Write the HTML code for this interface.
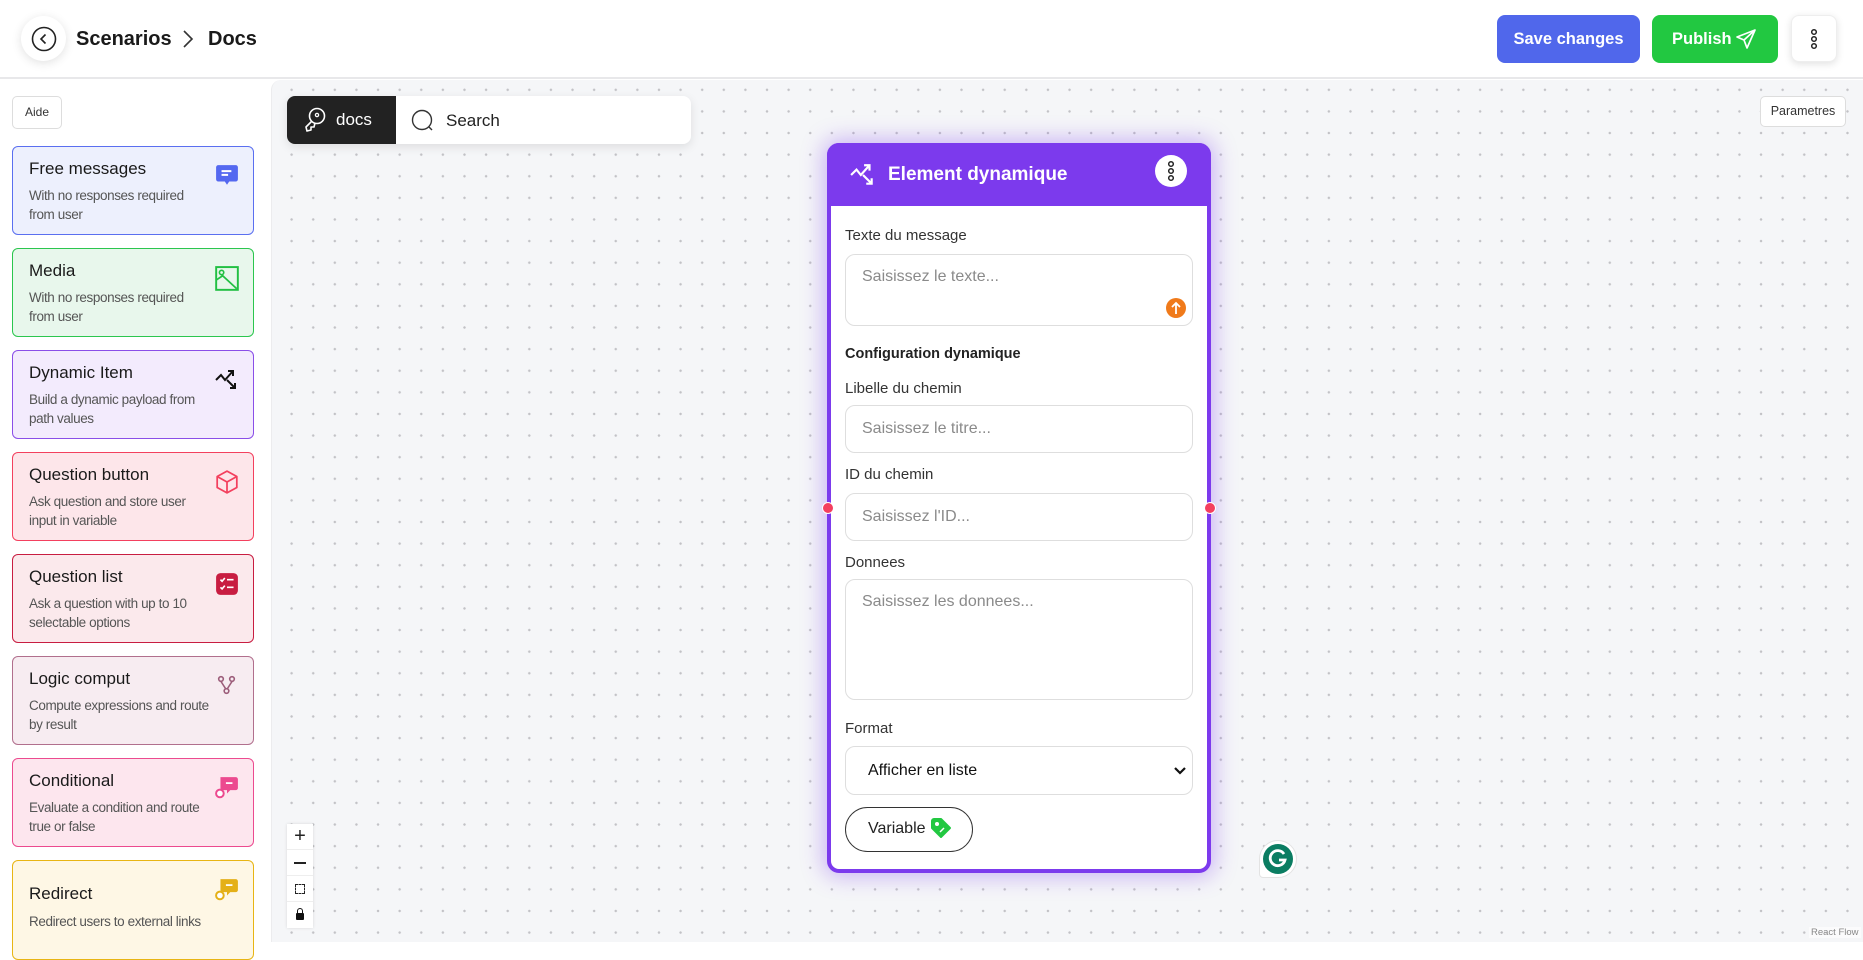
<!DOCTYPE html>
<html><head><meta charset="utf-8">
<style>
*{box-sizing:border-box;margin:0;padding:0}
body{width:1863px;height:942px;overflow:hidden;background:#fff;font-family:"Liberation Sans",sans-serif;color:#1f1f1f;position:relative}
.abs{position:absolute}
.header{left:0;top:0;width:1863px;height:79px;background:#fff;border-bottom:2px solid #e8e8ea}
.canvas{left:271px;top:80px;width:1592px;height:862px;background-color:#f5f6f8;
 background-image:radial-gradient(circle,#c2c2c6 1.1px,transparent 1.4px);
 background-size:21.62px 21.62px;background-position:8.8px -1px;border-top-left-radius:10px;border-left:1px solid #ececee}
.card{position:absolute;left:12px;width:242px;height:89px;border:1.5px solid;border-radius:6px}
.card .t{position:absolute;left:16px;top:12px;font-size:17px;color:#1a1a1a}
.card .d{position:absolute;left:16px;top:39px;font-size:13.5px;line-height:19px;color:#555;white-space:nowrap;letter-spacing:-0.4px}
.card svg{position:absolute;left:202px;top:17px}
.lbl{position:absolute;left:845px;font-size:15px;color:#333}
.inp{position:absolute;left:845px;width:348px;border:1.5px solid #dedede;border-radius:10px;background:#fff}
.ph{position:absolute;left:16px;font-size:16px;color:#8a8a8a}
</style></head><body>
<div class="abs header"></div>
<div class="abs" style="left:21px;top:16px;width:45px;height:45px;border-radius:50%;background:#fff;box-shadow:0 2px 10px rgba(0,0,0,.12)"></div>
<svg class="abs" style="left:31px;top:26px" width="26" height="26" viewBox="0 0 26 26"><circle cx="13" cy="13" r="11.5" fill="none" stroke="#222" stroke-width="1.6"/><path d="M14.5 8.5 L10 13 L14.5 17.5" fill="none" stroke="#222" stroke-width="1.6"/></svg>
<div class="abs" style="left:76px;top:28px;font-size:20px;font-weight:bold;color:#1a1a1a">Scenarios</div>
<svg class="abs" style="left:182px;top:29px" width="12" height="20" viewBox="0 0 12 20"><path d="M2 2 L10 10 L2 18" fill="none" stroke="#333" stroke-width="1.6"/></svg>
<div class="abs" style="left:208px;top:28px;font-size:20px;font-weight:bold;color:#1a1a1a">Docs</div>

<div class="abs" style="left:1497px;top:15px;width:143px;height:48px;background:#5067eb;border-radius:8px;color:#fff;font-weight:bold;font-size:16.5px;text-align:center;line-height:48px">Save changes</div>
<div class="abs" style="left:1652px;top:15px;width:126px;height:48px;background:#22c841;border-radius:8px;color:#fff;font-weight:bold;font-size:16.5px;line-height:48px;padding-left:20px">Publish</div>
<svg class="abs" style="left:1735px;top:28px" width="22" height="22" viewBox="0 0 22 22"><path d="M20 2 L2 9 L9 12 L12 20 Z M9 12 L20 2" fill="none" stroke="#fff" stroke-width="1.7" stroke-linejoin="round"/></svg>
<div class="abs" style="left:1791px;top:15px;width:46px;height:47px;background:#fff;border-radius:8px;box-shadow:0 2px 8px rgba(0,0,0,.12);border:1px solid #eee"></div>
<svg class="abs" style="left:1808px;top:28px" width="12" height="22" viewBox="0 0 12 22"><circle cx="6" cy="4" r="2.3" fill="none" stroke="#222" stroke-width="1.5"/><circle cx="6" cy="11" r="2.3" fill="none" stroke="#222" stroke-width="1.5"/><circle cx="6" cy="18" r="2.3" fill="none" stroke="#222" stroke-width="1.5"/></svg>

<div class="abs" style="left:12px;top:96px;width:50px;height:33px;border:1px solid #ddd;border-radius:5px;font-size:12px;text-align:center;line-height:31px;color:#333">Aide</div>

<div class="card" style="top:146px;background:#edf0fd;border-color:#5a6ff0"><div class="t">Free messages</div><div class="d">With no responses required<br>from user</div>
<svg width="24" height="24" viewBox="0 0 22 22"><path d="M3 1 H19 A2 2 0 0 1 21 3 V14 A2 2 0 0 1 19 16 H13 L11 19 L9 16 H3 A2 2 0 0 1 1 14 V3 A2 2 0 0 1 3 1Z" fill="#5468f0"/><path d="M6 6.5 H15 M6 10 H12" stroke="#fff" stroke-width="1.8"/></svg></div>
<div class="card" style="top:248px;background:#e8f7ec;border-color:#2bc64e"><div class="t">Media</div><div class="d">With no responses required<br>from user</div>
<svg width="24" height="26" viewBox="0 0 22 24"><rect x="1" y="1" width="20" height="21" fill="none" stroke="#22c043" stroke-width="1.8"/><circle cx="6" cy="6" r="2" fill="none" stroke="#22c043" stroke-width="1.5"/><path d="M1 13 L7 9 L20 21" fill="none" stroke="#22c043" stroke-width="1.6"/></svg></div>
<div class="card" style="top:350px;background:#f3ebfd;border-color:#8a4ee8"><div class="t">Dynamic Item</div><div class="d">Build a dynamic payload from<br>path values</div>
<svg width="24" height="24" viewBox="0 0 24 24"><path d="M1 12 L6 7 L10 12 L18 3 M13 3 H18 V8 M12 12 L20 20 M15 20 H20 V15" fill="none" stroke="#111" stroke-width="2"/></svg></div>
<div class="card" style="top:452px;background:#fde6ea;border-color:#f3405e"><div class="t">Question button</div><div class="d">Ask question and store user<br>input in variable</div>
<svg width="24" height="24" viewBox="0 0 22 22"><path d="M11 1 L20 6 V16 L11 21 L2 16 V6 Z M2 6 L11 11 L20 6 M11 11 V21" fill="none" stroke="#f3405e" stroke-width="1.6" stroke-linejoin="round"/></svg></div>
<div class="card" style="top:554px;background:#fbe9ec;border-color:#c81d41"><div class="t">Question list</div><div class="d">Ask a question with up to 10<br>selectable options</div>
<svg width="24" height="24" viewBox="0 0 22 22"><rect x="1" y="1" width="20" height="20" rx="4" fill="#c81d41"/><path d="M5 7 L6.5 8.5 L9 5.5 M11 7 H17 M5 14 L6.5 15.5 L9 12.5 M11 14 H17" fill="none" stroke="#fff" stroke-width="1.5"/></svg></div>
<div class="card" style="top:656px;background:#f7ecf1;border-color:#b16f8d"><div class="t">Logic comput</div><div class="d">Compute expressions and route<br>by result</div>
<svg width="22" height="22" viewBox="0 0 22 22"><circle cx="6" cy="5" r="2.3" fill="none" stroke="#9c5d7a" stroke-width="1.6"/><circle cx="17" cy="5" r="2.3" fill="none" stroke="#9c5d7a" stroke-width="1.6"/><circle cx="11.5" cy="17" r="2.3" fill="none" stroke="#9c5d7a" stroke-width="1.6"/><path d="M6 7.5 L10.5 14.5 M17 7.5 L12.5 14.5" stroke="#9c5d7a" stroke-width="1.6"/></svg></div>
<div class="card" style="top:758px;background:#fde6ee;border-color:#ec4a8f"><div class="t">Conditional</div><div class="d">Evaluate a condition and route<br>true or false</div>
<svg width="24" height="24" viewBox="0 0 22 22"><path d="M5 1 H19 A2 2 0 0 1 21 3 V11 A2 2 0 0 1 19 13 H14 L11 16 V13 H7 A2 2 0 0 1 5 11 Z" fill="#ec4a8f"/><path d="M10 6.5 H16" stroke="#fff" stroke-width="1.6"/><circle cx="4.5" cy="16" r="3.5" fill="#fff" stroke="#ec4a8f" stroke-width="1.8"/></svg></div>
<div class="card" style="top:860px;height:100px;background:#fef7e5;border-color:#e8b514"><div class="t" style="top:23px">Redirect</div><div class="d" style="top:51px">Redirect users to external links</div>
<svg width="24" height="24" viewBox="0 0 22 22"><path d="M5 1 H19 A2 2 0 0 1 21 3 V11 A2 2 0 0 1 19 13 H14 L11 16 V13 H7 A2 2 0 0 1 5 11 Z" fill="#e4b018"/><path d="M10 6.5 H16" stroke="#fff" stroke-width="1.6"/><circle cx="4.5" cy="16" r="3.5" fill="#fff" stroke="#e4b018" stroke-width="1.8"/></svg></div>

<div class="abs canvas"></div>
<div class="abs" style="left:287px;top:96px;width:404px;height:48px;background:#fff;border-radius:8px;box-shadow:0 3px 10px rgba(0,0,0,.1);overflow:hidden">
 <div class="abs" style="left:0;top:0;width:109px;height:48px;background:#222"></div>
</div>
<svg class="abs" style="left:303px;top:107px" width="24" height="26" viewBox="0 0 24 26"><circle cx="14" cy="9" r="7.5" fill="none" stroke="#fff" stroke-width="1.6"/><circle cx="14" cy="8" r="1.6" fill="none" stroke="#fff" stroke-width="1.3"/><path d="M9 14 L3 20 L4 24 L8 23 L8 20 L11 20 L12 16" fill="none" stroke="#fff" stroke-width="1.6" stroke-linejoin="round"/></svg>
<div class="abs" style="left:336px;top:110px;font-size:17px;color:#fff">docs</div>
<svg class="abs" style="left:411px;top:109px" width="24" height="24" viewBox="0 0 24 24"><circle cx="11" cy="11" r="9.5" fill="none" stroke="#333" stroke-width="1.4"/><path d="M18 18 L21 21" stroke="#333" stroke-width="1.4"/></svg>
<div class="abs" style="left:446px;top:111px;font-size:17px;color:#222">Search</div>

<div class="abs" style="left:1760px;top:96px;width:86px;height:31px;background:#fff;border:1px solid #ddd;border-radius:5px;font-size:12.5px;color:#333;text-align:center;line-height:29px">Parametres</div>

<div class="abs" style="left:827px;top:143px;width:384px;height:730px;background:#fff;border:4px solid #7c3aed;border-radius:12px;box-shadow:0 0 22px 4px rgba(124,58,237,.35)"></div>
<div class="abs" style="left:827px;top:143px;width:384px;height:63px;background:#7c3aed;border-radius:12px 12px 0 0"></div>
<svg class="abs" style="left:850px;top:162px" width="26" height="26" viewBox="0 0 24 24"><path d="M1 12 L6 7 L10 12 L18 3 M13 3 H18 V8 M12 12 L20 20 M15 20 H20 V15" fill="none" stroke="#fff" stroke-width="2"/></svg>
<div class="abs" style="left:888px;top:164px;font-size:19px;font-weight:bold;color:#fff">Element dynamique</div>
<div class="abs" style="left:1155px;top:155px;width:32px;height:32px;border-radius:50%;background:#fff"></div>
<svg class="abs" style="left:1165px;top:160px" width="12" height="22" viewBox="0 0 12 22"><circle cx="6" cy="4" r="2.3" fill="none" stroke="#222" stroke-width="1.5"/><circle cx="6" cy="11" r="2.3" fill="none" stroke="#222" stroke-width="1.5"/><circle cx="6" cy="18" r="2.3" fill="none" stroke="#222" stroke-width="1.5"/></svg>

<div class="lbl" style="top:227px">Texte du message</div>
<div class="inp" style="top:254px;height:72px"><div class="ph" style="top:13px">Saisissez le texte...</div></div>
<div class="abs" style="left:1166px;top:298px;width:20px;height:20px;border-radius:50%;background:#f07a1a"></div>
<svg class="abs" style="left:1170px;top:301px" width="12" height="14" viewBox="0 0 12 14"><path d="M6 13 V2 M2 6 L6 2 L10 6" fill="none" stroke="#fff" stroke-width="1.8"/></svg>
<div class="lbl" style="top:346px;font-weight:bold;font-size:14.5px;color:#222">Configuration dynamique</div>
<div class="lbl" style="top:380px">Libelle du chemin</div>
<div class="inp" style="top:405px;height:48px"><div class="ph" style="top:14px">Saisissez le titre...</div></div>
<div class="lbl" style="top:466px">ID du chemin</div>
<div class="inp" style="top:493px;height:48px"><div class="ph" style="top:14px">Saisissez l'ID...</div></div>
<div class="lbl" style="top:554px">Donnees</div>
<div class="inp" style="top:579px;height:121px"><div class="ph" style="top:13px">Saisissez les donnees...</div></div>
<div class="lbl" style="top:720px">Format</div>
<div class="inp" style="top:746px;height:49px"><div class="abs" style="left:22px;top:15px;font-size:16px;color:#111">Afficher en liste</div>
<svg class="abs" style="left:327px;top:18px" width="14" height="12" viewBox="0 0 14 12"><path d="M2 3 L7 8 L12 3" fill="none" stroke="#111" stroke-width="2.2"/></svg></div>
<div class="abs" style="left:845px;top:807px;width:128px;height:45px;border:1.5px solid #333;border-radius:23px"><div class="abs" style="left:22px;top:12px;font-size:16px;color:#222">Variable</div></div>
<svg class="abs" style="left:930px;top:817px" width="22" height="22" viewBox="0 0 22 22"><path d="M2 4 A2 2 0 0 1 4 2 H11 L20 11 L11 20 L2 11 Z" fill="#22c841" stroke="#22c841" stroke-width="2" stroke-linejoin="round"/><circle cx="7" cy="7" r="2" fill="#fff"/><path d="M10 15 L14 11" stroke="#fff" stroke-width="1.5"/></svg>

<div class="abs" style="left:822px;top:502px;width:12px;height:12px;border-radius:50%;background:#f43f5e;border:1.5px solid #fff"></div>
<div class="abs" style="left:1204px;top:502px;width:12px;height:12px;border-radius:50%;background:#f43f5e;border:1.5px solid #fff"></div>

<div class="abs" style="left:1259px;top:840px;width:38px;height:38px;border-radius:50% 50% 50% 4px;background:#fff;border:1px solid #e3e3e3"></div>
<div class="abs" style="left:1263px;top:844px;width:30px;height:30px;border-radius:50%;background:#0b7d62"></div>
<svg class="abs" style="left:1267px;top:848px" width="22" height="22" viewBox="0 0 22 22"><path d="M17 6 A7.5 7.5 0 1 0 18 12 H12" fill="none" stroke="#fff" stroke-width="2.8"/></svg>

<div class="abs" style="left:287px;top:824px;width:26px;height:104px;background:#fff;box-shadow:0 0 3px rgba(0,0,0,.12)">
 <div style="height:26px;border-bottom:1px solid #eee;text-align:center;font-size:20px;line-height:25px;color:#222">+</div>
 <div style="height:26px;border-bottom:1px solid #eee;position:relative"><div class="abs" style="left:7px;top:12px;width:12px;height:1.5px;background:#222"></div></div>
 <div style="height:26px;border-bottom:1px solid #eee;position:relative"><div class="abs" style="left:8px;top:8px;width:10px;height:10px;border:1.5px dashed #222"></div></div>
 <div style="height:26px;position:relative"><div class="abs" style="left:9px;top:11px;width:8px;height:7px;background:#111;border-radius:1px"></div><div class="abs" style="left:10px;top:6px;width:6px;height:7px;border:1.5px solid #111;border-bottom:none;border-radius:3px 3px 0 0"></div></div>
</div>
<div class="abs" style="left:1809px;top:927px;font-size:9.5px;color:#888;background:rgba(255,255,255,.6);padding:0 2px">React Flow</div>
</body></html>
